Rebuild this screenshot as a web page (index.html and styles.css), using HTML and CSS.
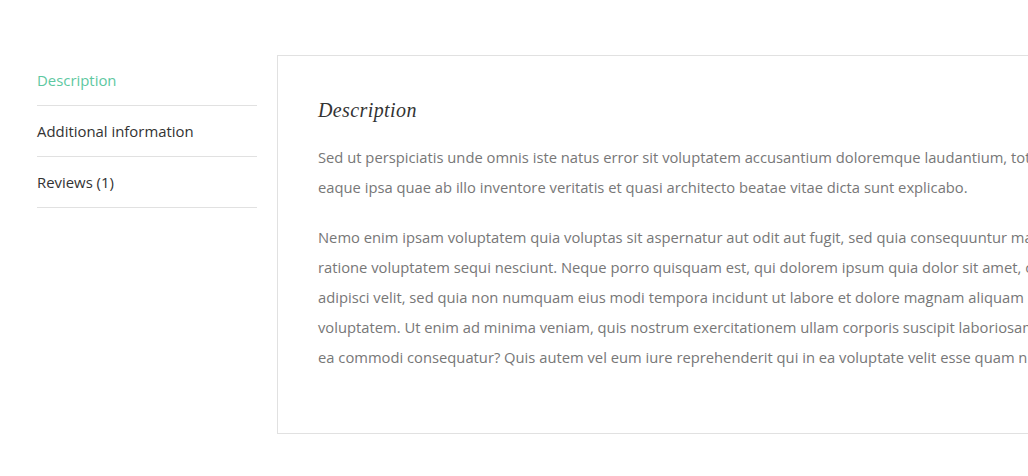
FILE: index.html
```html
<!DOCTYPE html>
<html>
<head>
<meta charset="utf-8">
<link rel="stylesheet" href="styles.css">
</head>
<body>
<div class="wrap">
  <ul class="tabs">
    <li class="tab active">Description</li>
    <li class="tab">Additional information</li>
    <li class="tab">Reviews (1)</li>
  </ul>
  <div class="panel">
    <h2 class="panel-title">Description</h2>
    <p>Sed ut perspiciatis unde omnis iste natus error sit voluptatem accusantium doloremque laudantium, totam rem aperiam, eaque ipsa quae ab illo inventore veritatis et quasi architecto beatae vitae dicta sunt explicabo.</p>
    <p>Nemo enim ipsam voluptatem quia voluptas sit aspernatur aut odit aut fugit, sed quia consequuntur magni dolores eos qui ratione voluptatem sequi nesciunt. Neque porro quisquam est, qui dolorem ipsum quia dolor sit amet, consectetur, adipisci velit, sed quia non numquam eius modi tempora incidunt ut labore et dolore magnam aliquam quaerat voluptatem. Ut enim ad minima veniam, quis nostrum exercitationem ullam corporis suscipit laboriosam, nisi ut aliquid ex ea commodi consequatur? Quis autem vel eum iure reprehenderit qui in ea voluptate velit esse quam nihil.</p>
  </div>
</div>
</body>
</html>
```
FILE: styles.css
```css
html, body {
  margin: 0;
  padding: 0;
  overflow: hidden;
  background: #fff;
}
body {
  font-family: "Open Sans", "Liberation Sans", sans-serif;
  width: 1028px;
  height: 476px;
}
.wrap {
  display: flex;
  align-items: flex-start;
  gap: 20px;
  padding: 55px 0 0 37px;
}
.tabs {
  list-style: none;
  margin: 0;
  padding: 0;
  width: 220px;
  flex: 0 0 220px;
}
.tab {
  font-size: 14.9px;
  line-height: 20px;
  color: #333;
  padding: 15px 0 15px;
  border-bottom: 1px solid #e1e1e1;
}
.tab.active {
  color: #5ec8a1;
}
.panel {
  flex: 0 0 auto;
  width: 846px;
  border: 1px solid #e1e1e1;
  padding: 39px 40px 41px 40px;
}
.panel-title {
  margin: 0 0 17px;
  font-family: "Liberation Serif", serif;
  font-style: italic;
  font-weight: normal;
  font-size: 20px;
  letter-spacing: 0.4px;
  line-height: 30px;
  color: #333;
}
.panel p {
  margin: 0 0 20px;
  font-size: 14.75px;
  line-height: 30px;
  color: #777;
}
```
